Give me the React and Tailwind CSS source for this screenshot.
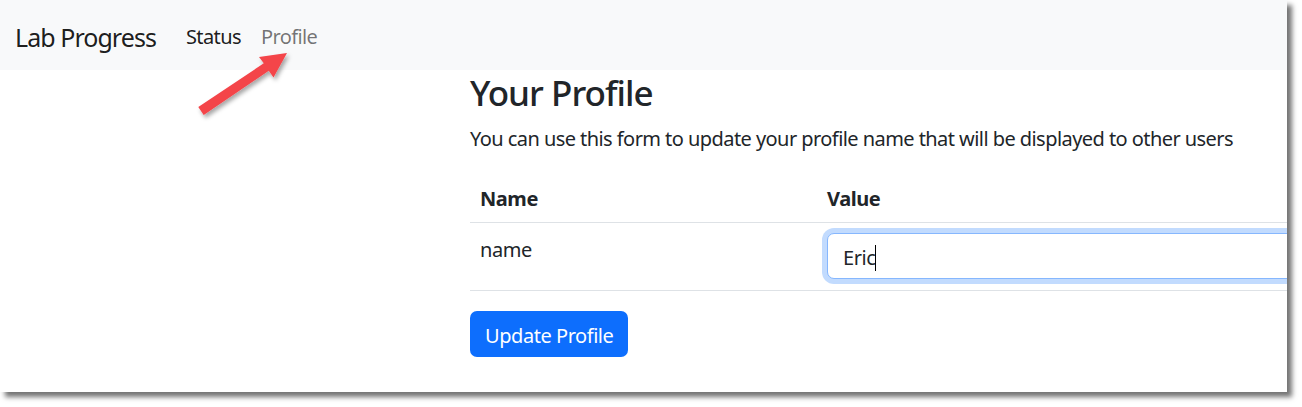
export default function App() {
    return (
        <div className="w-[1302px] h-[407px] bg-white overflow-hidden font-['Noto_Sans',sans-serif] tracking-[-0.028em] text-[#212529]">
            <div className="relative w-[1287px] h-[392px] bg-white overflow-hidden shadow-[5px_5px_5px_rgba(0,0,0,0.55)]">
                {/* Top navbar */}
                <nav className="h-[70px] bg-[#f8f9fa] flex items-center px-[15px] pt-[4px]">
                    <span className="text-[25px] leading-[37px] tracking-[-0.038em] text-black/90 mr-[20px]">
                        Lab Progress
                    </span>
                    <span className="px-[10px] text-[20px] leading-[30px] tracking-[-0.03em] text-black/90">
                        Status
                    </span>
                    <span className="px-[10px] text-[20px] leading-[30px] tracking-[-0.03em] text-black/55">
                        Profile
                    </span>
                </nav>

                {/* Profile form */}
                <main className="pl-[470px]">
                    <h3 className="text-[35px] leading-[42px] font-medium tracking-[-0.028em] pt-[2px] mb-[8px]">
                        Your Profile
                    </h3>
                    <p className="text-[20px] leading-[30px] tracking-[-0.028em] pt-[2px] mb-[18px] whitespace-nowrap">
                        You can use this form to update your profile name that will be displayed to other users
                    </p>

                    <table className="w-[1000px] text-[20px] leading-[30px] mb-[20px] border-collapse">
                        <thead>
                            <tr className="border-b border-[#dee2e6]">
                                <th className="w-[347px] px-[10px] pt-[12px] pb-[8px] text-left font-bold">Name</th>
                                <th className="px-[10px] pt-[12px] pb-[8px] text-left font-bold">Value</th>
                            </tr>
                        </thead>
                        <tbody>
                            <tr className="border-b border-[#dee2e6]">
                                <td className="px-[10px] pt-[12px] align-top">name</td>
                                <td className="px-[10px] pt-[10px] pb-[11px] align-top">
                                    <div className="h-[46px] flex items-center px-[15px] pt-[3px] border border-[#86b7fe] rounded-[7px] shadow-[0_0_0_5px_rgba(13,110,253,0.25)] bg-white">
                                        <span>Eric</span>
                                        <span className="w-px h-[26px] bg-black"></span>
                                    </div>
                                </td>
                            </tr>
                        </tbody>
                    </table>

                    <button className="h-[46px] px-[15px] pt-[3px] flex items-center bg-[#0d6efd] text-white text-[20px] leading-[30px] rounded-[7px]">
                        Update Profile
                    </button>
                </main>

                {/* Annotation arrow pointing at Profile */}
                <svg className="absolute left-0 top-0 pointer-events-none" width="320" height="130">
                    <defs>
                        <filter id="arrowShadow" x="-20%" y="-20%" width="140%" height="140%">
                            <feDropShadow dx="2" dy="3" stdDeviation="2" floodColor="#000" floodOpacity="0.35" />
                        </filter>
                    </defs>
                    <polygon
                        points="198.3,107 203.7,115 268.8,70.7 273.5,77.5 287,53 259,57 263.8,63.3"
                        fill="#f4444a"
                        filter="url(#arrowShadow)"
                    />
                </svg>
            </div>
        </div>
    );
}
